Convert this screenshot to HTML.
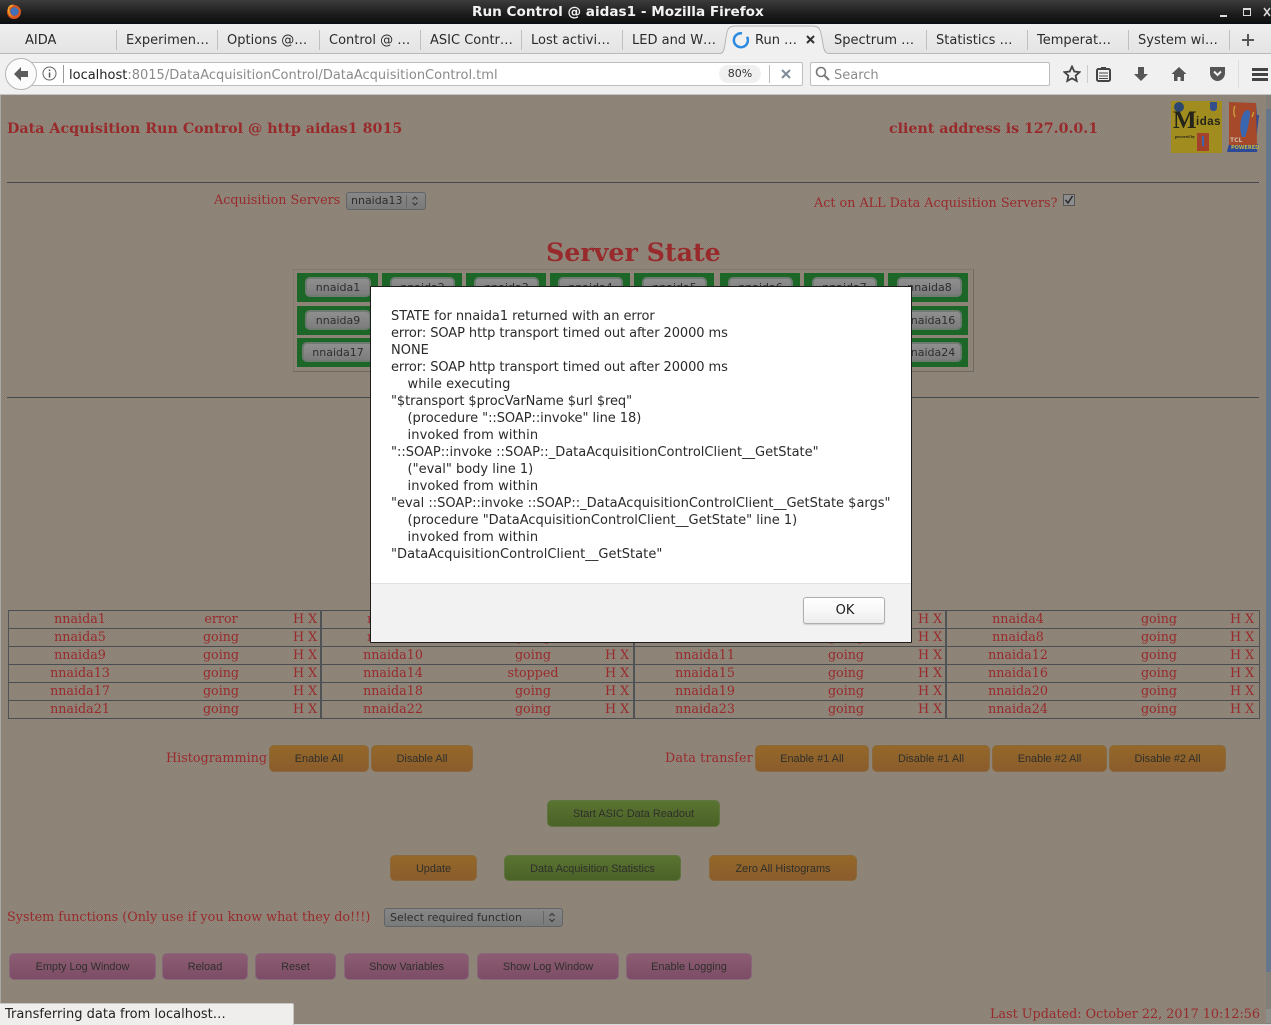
<!DOCTYPE html>
<html><head><meta charset="utf-8"><title>Run Control @ aidas1</title>
<style>
html,body{margin:0;padding:0;width:1271px;height:1025px;overflow:hidden;background:#8e8478}
*{box-sizing:border-box}
.a{position:absolute;white-space:nowrap}
.ui{font-family:"DejaVu Sans",sans-serif}
.tab{position:absolute;top:33px;font:13px/15px "DejaVu Sans",sans-serif;color:#2a2a2a;white-space:nowrap}
.sep{position:absolute;top:30px;width:1px;height:20px;background:#c0c0c0}
.s{font-family:"DejaVu Serif",serif;color:#992a2c;position:absolute;white-space:nowrap}
.g{position:absolute;width:81px;height:29px;background:#1c6628;outline:0}
.gb{position:absolute;height:20px;border:2px solid #6f7a70;border-radius:5px;background:linear-gradient(#8f8f8f,#7c7c7c);font:11px/17px "DejaVu Sans",sans-serif;color:#2e2e2e;text-align:center}
.btn{position:absolute;border-radius:5px;font:10.900px "Liberation Sans",sans-serif;color:#2f2f2a;text-align:center;white-space:nowrap}
.o{top:745px;height:27px;line-height:27px;background:linear-gradient(#946829,#8b5c2d);border:1px solid #8a6a3c}
.gr{background:linear-gradient(#5a7432,#4b6227);border:1px solid #5f7440}
.p{top:953px;height:27px;line-height:26px;background:linear-gradient(#8c5d72,#7d4c67);border:1px solid #86687a}
.r{position:absolute;left:8px;width:1251px;height:18px;border-top:1px solid #4a4e52;display:grid;grid-template-columns:144px 138px 31px 144px 136px 33px 142px 140px 30px 144px 138px 31px;font:12.700px/17px "DejaVu Serif",serif;color:#992a2c;text-align:center}
.r span{margin-top:-1px}
.r span:nth-child(3),.r span:nth-child(6),.r span:nth-child(9),.r span:nth-child(12){text-align:left;white-space:nowrap}
.r span:nth-child(3){padding-left:3px}.r span:nth-child(6){padding-left:4px}.r span:nth-child(9){padding-left:2px}.r span:nth-child(12){padding-left:2px}
.v{position:absolute;top:610px;height:108px;width:2px;background:#4f5356}
#bg{position:absolute;left:0;top:95px;width:1271px;height:930px;background-color:#8e8478;background-image:repeating-conic-gradient(#8a8074 0 25%,#91877b 0 50%);background-size:2px 2px}
.lab{font-size:12.750px;line-height:17px}
</style></head><body>

<!-- title bar -->
<div class="a" style="left:0;top:0;width:1271px;height:24px;background:linear-gradient(#3c3c3c,#1c1c1c 60%,#0e0e0e)"></div>
<div class="a" style="left:0;top:22px;width:1271px;height:2px;background:#0b0f14"></div>
<svg class="a" style="left:6px;top:3px" width="16" height="18" viewBox="0 0 16 18"><circle cx="8" cy="9" r="7" fill="#d9541e"/><circle cx="8.500" cy="8.500" r="4.200" fill="#3f70b8"/><path d="M2 5C3 2 6 1 9 2c-2 0-3 1-3 2-2 0-3 1-2.500 3C3 8 4 13 8 14 4 14 1 10 2 5z" fill="#f3a62a"/></svg>
<div class="a" style="left:472px;top:4px;font:bold 13.600px/17px 'DejaVu Sans',sans-serif;color:#f2f2f2">Run Control @ aidas1 - Mozilla Firefox</div>
<div class="a" style="left:1220px;top:15px;width:7px;height:2px;background:#ddd"></div>
<div class="a" style="left:1243px;top:8px;width:8px;height:8px;border:1px solid #ddd;border-top-width:2px"></div>
<svg class="a" style="left:1263px;top:7px" width="8" height="10"><path d="M1 1l6 8M7 1L1 9" stroke="#ddd" stroke-width="1.500"/></svg>

<!-- tabs -->
<div class="a" style="left:0;top:24px;width:1271px;height:30px;background:linear-gradient(#efefef,#e4e4e4);border-bottom:1px solid #b9b9b9"></div>
<div class="tab" style="left:25px">AIDA</div><div class="sep" style="left:116px"></div>
<div class="tab" style="left:126px">Experimen…</div><div class="sep" style="left:217px"></div>
<div class="tab" style="left:227px">Options @…</div><div class="sep" style="left:319px"></div>
<div class="tab" style="left:329px">Control @ …</div><div class="sep" style="left:420px"></div>
<div class="tab" style="left:430px">ASIC Contr…</div><div class="sep" style="left:521px"></div>
<div class="tab" style="left:531px">Lost activi…</div><div class="sep" style="left:622px"></div>
<div class="tab" style="left:632px">LED and W…</div>
<svg class="a" style="left:718px;top:25px" width="114" height="30" viewBox="0 0 114 30"><path d="M0 29c5 0 6-3 7-10C9 8 8 1 17 1h78c8 0 8 7 10 18 1 7 2 10 9 10v1H0z" fill="#f0f0f0" stroke="#b5b5b5"/><path d="M1 29.500h112" stroke="#f0f0f0" stroke-width="1"/></svg>
<svg class="a" style="left:732px;top:31px" width="17" height="18"><path d="M10 2.300a7 7 0 1 0 5 3.500" fill="none" stroke="#2c8ae0" stroke-width="2.500"/></svg>
<div class="tab" style="left:755px">Run …</div>
<svg class="a" style="left:806px;top:35px" width="9" height="9"><path d="M1 1l7 7M8 1L1 8" stroke="#333" stroke-width="2"/></svg>
<div class="tab" style="left:834px">Spectrum …</div><div class="sep" style="left:926px"></div>
<div class="tab" style="left:936px">Statistics …</div><div class="sep" style="left:1027px"></div>
<div class="tab" style="left:1037px">Temperat…</div><div class="sep" style="left:1128px"></div>
<div class="tab" style="left:1138px">System wi…</div><div class="sep" style="left:1229px"></div>
<svg class="a" style="left:1241px;top:33px" width="14" height="14"><path d="M7 1v12M1 7h12" stroke="#555" stroke-width="2"/></svg>

<!-- nav bar -->
<div class="a" style="left:0;top:54px;width:1271px;height:41px;background:#f0f0f0;border-bottom:1px solid #c4c4c4"></div>
<div class="a" style="left:30px;top:62px;width:773px;height:24px;background:#fff;border:1px solid #bdbdbd;border-radius:2px"></div>
<div class="a" style="left:5px;top:58px;width:32px;height:32px;border-radius:50%;background:#fbfbfb;border:1px solid #b5b5b5"></div>
<svg class="a" style="left:13px;top:66px" width="16" height="16"><path d="M8 1L1 8l7 7V11h7V5H8z" fill="#5c5c5c"/></svg>
<svg class="a" style="left:42px;top:66px" width="15" height="15"><circle cx="7.500" cy="7.500" r="6.500" fill="none" stroke="#666"/><rect x="6.800" y="6.500" width="1.500" height="5" fill="#555"/><rect x="6.800" y="3.500" width="1.500" height="1.600" fill="#555"/></svg>
<div class="a" style="left:63px;top:65px;width:1px;height:18px;background:#999"></div>
<div class="a ui" style="left:69px;top:68px;font-size:13px;line-height:16px;color:#8b8b8b"><span style="color:#222">localhost</span>:8015/DataAcquisitionControl/DataAcquisitionControl.tml</div>
<div class="a ui" style="left:719px;top:65px;width:42px;height:18px;border-radius:9px;background:#f0f0f0;font-size:11px;line-height:18px;text-align:center;color:#333">80%</div>
<div class="a" style="left:769px;top:65px;width:1px;height:18px;background:#bbb"></div>
<svg class="a" style="left:780px;top:68px" width="12" height="12"><path d="M2 2l8 8M10 2l-8 8" stroke="#7f8c99" stroke-width="2"/></svg>
<div class="a" style="left:810px;top:62px;width:240px;height:24px;background:#fff;border:1px solid #bdbdbd;border-radius:2px"></div>
<svg class="a" style="left:815px;top:66px" width="15" height="15"><circle cx="6" cy="6" r="4.500" fill="none" stroke="#777" stroke-width="1.600"/><path d="M9.500 9.500L14 14" stroke="#777" stroke-width="2"/></svg>
<div class="a ui" style="left:834px;top:68px;font-size:13px;line-height:16px;color:#8b8b8b">Search</div>
<svg class="a" style="left:1063px;top:65px" width="18" height="18" viewBox="0 0 18 18"><path d="M9 1.500l2.300 5 5.200.6-3.900 3.600 1.100 5.300L9 13.300 4.300 16l1.100-5.300L1.500 7.100l5.200-.6z" fill="none" stroke="#444" stroke-width="1.800"/></svg>
<div class="a" style="left:1087px;top:65px;width:1px;height:18px;background:#ccc"></div>
<svg class="a" style="left:1096px;top:66px" width="15" height="16" viewBox="0 0 15 16"><rect x="1" y="3" width="13" height="12" rx="1.500" fill="none" stroke="#444" stroke-width="2"/><rect x="5" y="1" width="5" height="3" fill="#444"/><path d="M3 7h9M3 10h9M3 12.500h9" stroke="#444"/></svg>
<svg class="a" style="left:1133px;top:66px" width="16" height="16" viewBox="0 0 16 16"><path d="M5 1h6v7h4l-7 7-7-7h4z" fill="#555"/></svg>
<svg class="a" style="left:1171px;top:66px" width="16" height="16" viewBox="0 0 16 16"><path d="M8 1L0.500 8h2.500v7h3.500v-4h3v4H13V8h2.500z" fill="#555"/></svg>
<svg class="a" style="left:1209px;top:66px" width="17" height="16" viewBox="0 0 17 16"><path d="M1 1h15v6a7.500 8 0 0 1-15 0z" fill="#555"/><path d="M5 5.500l3.500 3.500L12 5.500" fill="none" stroke="#f0f0f0" stroke-width="2"/></svg>
<div class="a" style="left:1238px;top:60px;width:1px;height:28px;background:#ddd"></div>
<div class="a" style="left:1252px;top:68px;width:16px;height:3px;background:#444"></div>
<div class="a" style="left:1252px;top:73px;width:16px;height:3px;background:#444"></div>
<div class="a" style="left:1252px;top:78px;width:16px;height:3px;background:#444"></div>

<!-- page -->
<div id="bg"></div>
<div class="a" style="left:0;top:95px;width:1px;height:930px;background:#a8a8a4"></div>

<div class="s" style="left:7px;top:120px;font-size:14.270px;line-height:19px;font-weight:bold">Data Acquisition Run Control @ http aidas1 8015</div>
<div class="s" style="left:889px;top:120px;font-size:14.200px;line-height:19px;font-weight:bold">client address is 127.0.0.1</div>

<!-- Midas logo -->
<div class="a" style="left:1171px;top:101px;width:51px;height:52px;background:#a18c1f"></div>
<div class="a" style="left:1174px;top:102px;width:10px;height:10px;border-radius:50%;background:#2c4770"></div>
<div class="a" style="left:1210px;top:102px;width:7px;height:9px;background:#33508a;border-radius:0 0 3px 3px"></div>
<div class="a" style="left:1173px;top:107px;font:bold 25px/27px 'Liberation Serif',serif;color:#25241a">M</div>
<div class="a" style="left:1196px;top:115px;font:bold 11.500px/14px 'Liberation Sans',sans-serif;color:#25241a;letter-spacing:.5px">idas</div>
<div class="a" style="left:1175px;top:134px;font:bold 4px/6px 'Liberation Serif',serif;color:#25241a">powered by</div>
<div class="a" style="left:1197px;top:133px;width:12px;height:18px;background:#a4412a"></div>
<div class="a" style="left:1202px;top:136px;width:2px;height:10px;background:#3a66b0"></div>
<!-- Tcl logo -->
<svg class="a" style="left:1227px;top:101px" width="33" height="52" viewBox="0 0 33 52"><path d="M3 2l26 1 1 11h2l-3 26-26 2-3 9 3-9z" fill="#2d4a96"/><path d="M2 43l29 0-1 8H0z" fill="#2d4a96"/><path d="M2 1l27 1 1 42-28 0z" fill="#a5492a"/><path d="M15 36c-3-8-2-20 3-26 3-2 5 0 5 2 0 6-3 20-5 24z" fill="#3a66b0"/><path d="M8 5c-2 4-1 9 0 11M25 16c1-2 1-4 2-5" stroke="#c79a3a" stroke-width="1.500" fill="none"/></svg>
<div class="a" style="left:1230px;top:137px;font:bold 6px/7px 'DejaVu Sans',sans-serif;color:#cbb9a5">TCL</div>
<div class="a" style="left:1231px;top:145px;font:bold 5px/7px 'DejaVu Sans',sans-serif;color:#c9b544">POWERED</div>

<div class="a" style="left:7px;top:182px;width:1252px;height:1px;background:#43494d"></div>

<div class="s lab" style="left:214px;top:192px">Acquisition Servers</div>
<div class="a" style="left:346px;top:192px;width:80px;height:18px;border:1px solid #5f6468;border-radius:3px;background:linear-gradient(#878787,#7a7a7a);font:11px/16px 'DejaVu Sans',sans-serif;color:#2e2e2e;padding-left:4px">nnaida13</div>
<div class="a" style="left:406px;top:195px;width:1px;height:12px;background:#666"></div>
<svg class="a" style="left:411px;top:195px" width="8" height="12"><path d="M1.500 4.500L4 2l2.500 2.500M1.500 7.500L4 10l2.500-2.500" stroke="#333" fill="none"/></svg>

<div class="s lab" style="left:814px;top:195px">Act on ALL Data Acquisition Servers?</div>
<div class="a" style="left:1063px;top:194px;width:12px;height:12px;border:1px solid #555;background:#8d8d8d"></div>
<svg class="a" style="left:1064px;top:195px" width="10" height="10"><path d="M1.500 5l2.500 3 4.500-7" stroke="#2a2a2a" stroke-width="1.500" fill="none"/></svg>

<div class="s" style="left:546px;top:236px;font-size:25.300px;line-height:33px;font-weight:bold">Server State</div>

<!-- server grid -->
<div class="a" style="left:293px;top:269px;width:681px;height:103px;border:1px solid #6d6a63;border-top-color:#7d7a72;border-left-color:#7d7a72"></div>
<div class="g" style="left:297px;top:273px"></div><div class="g" style="left:382px;top:273px;width:80px"></div><div class="g" style="left:466px;top:273px;width:80px"></div><div class="g" style="left:550px;top:273px;width:80px"></div><div class="g" style="left:634px;top:273px;width:80px"></div><div class="g" style="left:720px;top:273px;width:80px"></div><div class="g" style="left:804px;top:273px;width:80px"></div><div class="g" style="left:888px;top:273px;width:80px"></div>
<div class="g" style="left:297px;top:306px"></div><div class="g" style="left:888px;top:306px;width:80px"></div>
<div class="g" style="left:297px;top:338px"></div><div class="g" style="left:888px;top:338px;width:80px"></div>
<div class="gb" style="left:305px;top:277px;width:66px">nnaida1</div>
<div class="gb" style="left:390px;top:277px;width:65px">nnaida2</div>
<div class="gb" style="left:474px;top:277px;width:65px">nnaida3</div>
<div class="gb" style="left:558px;top:277px;width:65px">nnaida4</div>
<div class="gb" style="left:642px;top:277px;width:65px">nnaida5</div>
<div class="gb" style="left:728px;top:277px;width:65px">nnaida6</div>
<div class="gb" style="left:812px;top:277px;width:65px">nnaida7</div>
<div class="gb" style="left:897px;top:277px;width:65px">nnaida8</div>
<div class="gb" style="left:305px;top:310px;width:66px">nnaida9</div>
<div class="gb" style="left:897px;top:310px;width:65px">nnaida16</div>
<div class="gb" style="left:302px;top:342px;width:72px">nnaida17</div>
<div class="gb" style="left:897px;top:342px;width:65px">nnaida24</div>

<div class="a" style="left:7px;top:397px;width:1252px;height:1px;background:#43494d"></div>

<!-- status table -->
<div class="r" style="top:610px"><span>nnaida1</span><span>error</span><span>H X</span><span>nnaida2</span><span>going</span><span>H X</span><span>nnaida3</span><span>going</span><span>H X</span><span>nnaida4</span><span>going</span><span>H X</span></div>
<div class="r" style="top:628px"><span>nnaida5</span><span>going</span><span>H X</span><span>nnaida6</span><span>going</span><span>H X</span><span>nnaida7</span><span>going</span><span>H X</span><span>nnaida8</span><span>going</span><span>H X</span></div>
<div class="r" style="top:646px"><span>nnaida9</span><span>going</span><span>H X</span><span>nnaida10</span><span>going</span><span>H X</span><span>nnaida11</span><span>going</span><span>H X</span><span>nnaida12</span><span>going</span><span>H X</span></div>
<div class="r" style="top:664px"><span>nnaida13</span><span>going</span><span>H X</span><span>nnaida14</span><span>stopped</span><span>H X</span><span>nnaida15</span><span>going</span><span>H X</span><span>nnaida16</span><span>going</span><span>H X</span></div>
<div class="r" style="top:682px"><span>nnaida17</span><span>going</span><span>H X</span><span>nnaida18</span><span>going</span><span>H X</span><span>nnaida19</span><span>going</span><span>H X</span><span>nnaida20</span><span>going</span><span>H X</span></div>
<div class="r" style="top:700px"><span>nnaida21</span><span>going</span><span>H X</span><span>nnaida22</span><span>going</span><span>H X</span><span>nnaida23</span><span>going</span><span>H X</span><span>nnaida24</span><span>going</span><span>H X</span></div>
<div class="a" style="left:8px;top:718px;width:1252px;height:1px;background:#4a4e52"></div>
<div class="v" style="left:8px;width:1px"></div><div class="v" style="left:320px"></div><div class="v" style="left:633px"></div><div class="v" style="left:945px"></div><div class="v" style="left:1259px;width:1px"></div>

<div class="s lab" style="left:166px;top:750px">Histogramming</div>
<div class="btn o" style="left:269px;width:100px">Enable All</div>
<div class="btn o" style="left:371px;width:102px">Disable All</div>
<div class="s lab" style="left:665px;top:750px;letter-spacing:.1px">Data transfer</div>
<div class="btn o" style="left:755px;width:114px">Enable #1 All</div>
<div class="btn o" style="left:872px;width:118px">Disable #1 All</div>
<div class="btn o" style="left:992px;width:115px">Enable #2 All</div>
<div class="btn o" style="left:1109px;width:117px">Disable #2 All</div>

<div class="btn gr" style="left:547px;top:800px;width:173px;height:27px;line-height:26px">Start ASIC Data Readout</div>
<div class="btn o" style="left:390px;top:855px;width:87px;height:26px;line-height:26px">Update</div>
<div class="btn gr" style="left:504px;top:855px;width:177px;height:26px;line-height:26px">Data Acquisition Statistics</div>
<div class="btn o" style="left:709px;top:855px;width:148px;height:26px;line-height:26px">Zero All Histograms</div>

<div class="s lab" style="left:7px;top:909px">System functions (Only use if you know what they do!!!)</div>
<div class="a" style="left:384px;top:908px;width:179px;height:19px;border:1px solid #5f6468;border-radius:3px;background:linear-gradient(#878787,#7a7a7a);font:11px/17px 'DejaVu Sans',sans-serif;color:#2e2e2e;padding-left:5px">Select required function</div>
<div class="a" style="left:543px;top:911px;width:1px;height:13px;background:#666"></div>
<svg class="a" style="left:548px;top:911px" width="8" height="13"><path d="M1.500 5L4 2.500 6.500 5M1.500 8L4 10.500 6.500 8" stroke="#333" fill="none"/></svg>

<div class="btn p" style="left:9px;width:147px">Empty Log Window</div>
<div class="btn p" style="left:162px;width:86px">Reload</div>
<div class="btn p" style="left:255px;width:81px">Reset</div>
<div class="btn p" style="left:344px;width:125px">Show Variables</div>
<div class="btn p" style="left:477px;width:142px">Show Log Window</div>
<div class="btn p" style="left:626px;width:126px">Enable Logging</div>

<div class="s lab" style="right:11px;top:1006px">Last Updated: October 22, 2017 10:12:56</div>

<!-- scrollbar -->
<div class="a" style="left:1266px;top:95px;width:5px;height:930px;background:#827f7a"></div>
<div class="a" style="left:1266px;top:109px;width:5px;height:863px;background:#66778c"></div>
<div class="a" style="left:1266px;top:1009px;width:5px;height:14px;background:#8d8d8a"></div>
<div class="a" style="left:0;top:1024px;width:1271px;height:1px;background:#d8d8d8"></div>

<!-- status panel -->
<div class="a ui" style="left:0;top:1003px;width:294px;height:22px;background:#efeeec;border-top:1px solid #c6c6c6;border-right:1px solid #c6c6c6;border-radius:0 2px 0 0;font-size:13px;line-height:21px;color:#222;padding-left:5px">Transferring data from localhost…</div>

<!-- modal -->
<div class="a" style="left:370px;top:286px;width:542px;height:357px;background:#fff;border:1px solid #1c1c1c;border-radius:1px">
<div class="ui" style="position:absolute;left:20px;top:21px;font-size:13px;line-height:17px;color:#2a2a2a;white-space:pre"><span style="letter-spacing:-.05px">STATE for nnaida1 returned with an error</span>
<span style="letter-spacing:-.08px">error: SOAP http transport timed out after 20000 ms</span>
NONE
<span style="letter-spacing:-.08px">error: SOAP http transport timed out after 20000 ms</span>
    <span style="letter-spacing:.07px">while executing</span>
<span style="letter-spacing:-.085px">"$transport $procVarName $url $req"</span>
    <span style="letter-spacing:-.05px">(procedure "::SOAP::invoke" line 18)</span>
    <span style="letter-spacing:.1px">invoked from within</span>
"::SOAP::invoke ::SOAP::_DataAcquisitionControlClient__GetState"
    ("eval" body line 1)
    <span style="letter-spacing:.1px">invoked from within</span>
"eval ::SOAP::invoke ::SOAP::_DataAcquisitionControlClient__GetState $args"
    (procedure "DataAcquisitionControlClient__GetState" line 1)
    <span style="letter-spacing:.1px">invoked from within</span>
<span style="letter-spacing:.05px">"DataAcquisitionControlClient__GetState"</span></div>
<div style="position:absolute;left:0;top:296px;width:540px;height:59px;background:#f2f2f2;border-top:1px solid #e2e2e2"></div>
<div class="ui" style="position:absolute;left:432px;top:310px;width:82px;height:27px;border:1px solid #aeaeae;border-radius:3px;background:linear-gradient(#fff,#f8f8f8 50%,#ececec);font-size:13px;line-height:25px;text-align:center;color:#1a1a1a;box-shadow:0 1px 1px rgba(0,0,0,.15);padding-left:2px">OK</div>
</div>
</body></html>
